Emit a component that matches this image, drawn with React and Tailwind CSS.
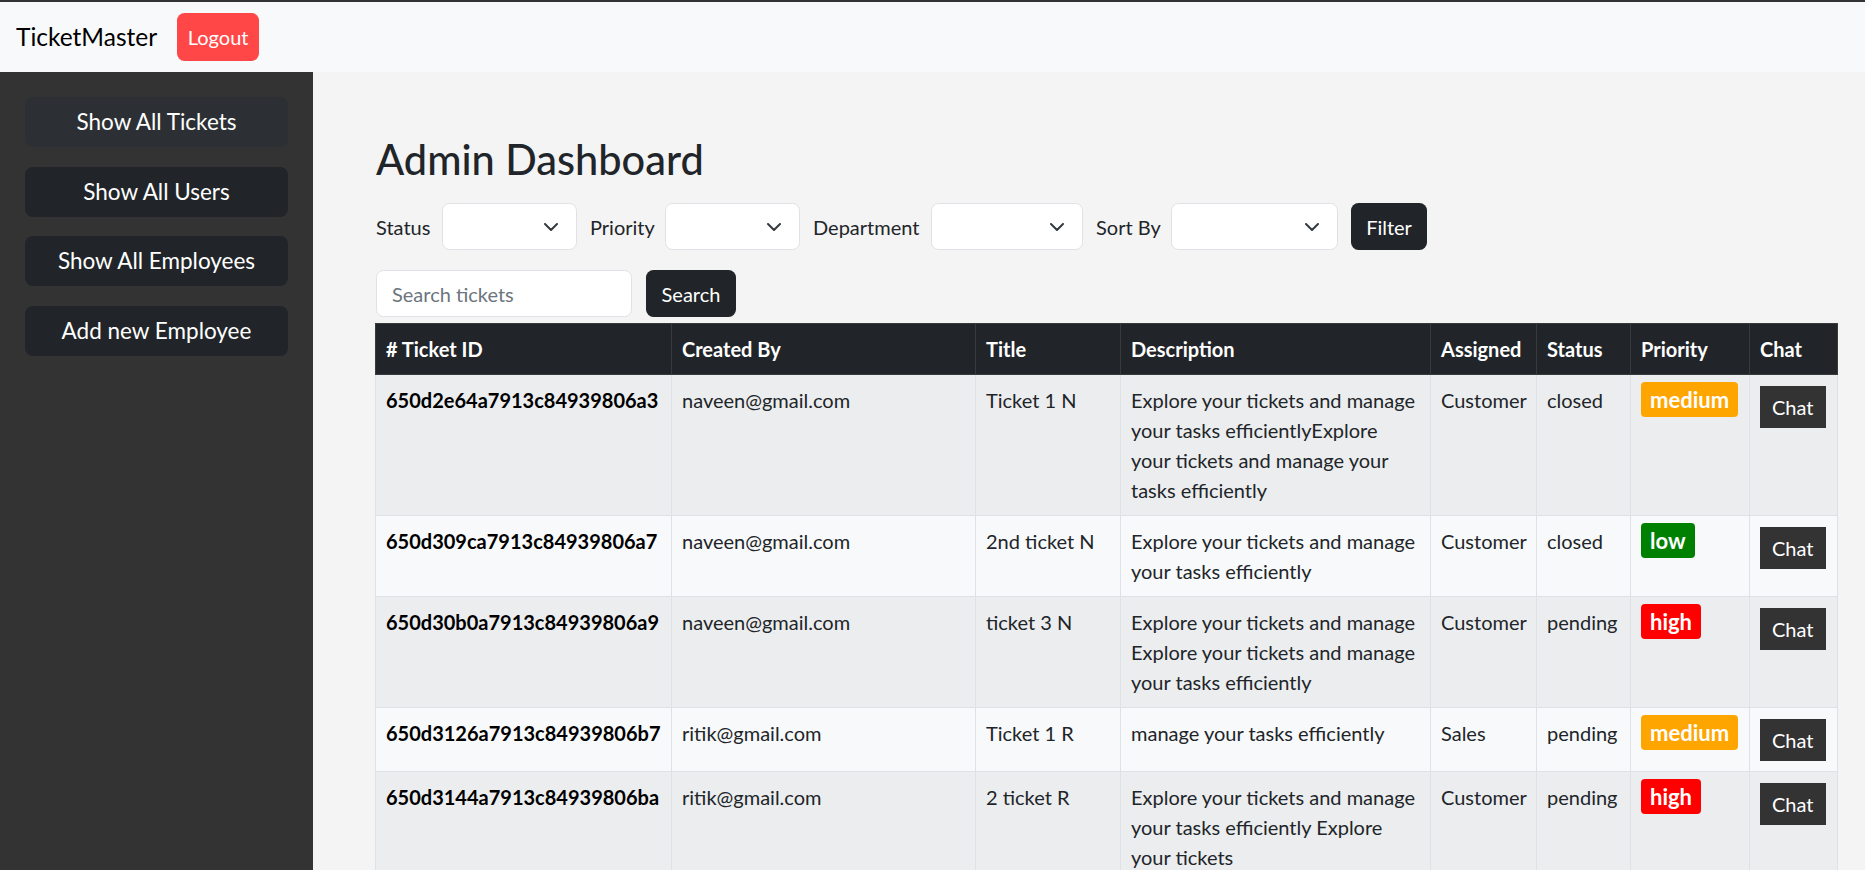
import { useState } from 'react'

const tickets = [
  {
    id: '650d2e64a7913c84939806a3',
    by: 'naveen@gmail.com',
    title: 'Ticket 1 N',
    desc: 'Explore your tickets and manage your tasks efficientlyExplore your tickets and manage your tasks efficiently',
    dept: 'Customer',
    status: 'closed',
    priority: 'medium',
  },
  {
    id: '650d309ca7913c84939806a7',
    by: 'naveen@gmail.com',
    title: '2nd ticket N',
    desc: 'Explore your tickets and manage your tasks efficiently',
    dept: 'Customer',
    status: 'closed',
    priority: 'low',
  },
  {
    id: '650d30b0a7913c84939806a9',
    by: 'naveen@gmail.com',
    title: 'ticket 3 N',
    desc: 'Explore your tickets and manage Explore your tickets and manage your tasks efficiently',
    dept: 'Customer',
    status: 'pending',
    priority: 'high',
  },
  {
    id: '650d3126a7913c84939806b7',
    by: 'ritik@gmail.com',
    title: 'Ticket 1 R',
    desc: 'manage your tasks efficiently',
    dept: 'Sales',
    status: 'pending',
    priority: 'medium',
  },
  {
    id: '650d3144a7913c84939806ba',
    by: 'ritik@gmail.com',
    title: '2 ticket R',
    desc: 'Explore your tickets and manage your tasks efficiently Explore your tickets',
    dept: 'Customer',
    status: 'pending',
    priority: 'high',
  },
]

const priorityColor = {
  low: 'bg-[#008000]',
  medium: 'bg-[#ffa500]',
  high: 'bg-[#ff0000]',
}

function Chevron() {
  return (
    <svg width="14" height="8" viewBox="0 0 14 8" fill="none">
      <path d="M1 1l6 6 6-6" stroke="#343a40" strokeWidth="2" strokeLinecap="round" strokeLinejoin="round" />
    </svg>
  )
}

// 下拉框（空值）
function FakeSelect({ width }) {
  return (
    <div className={`${width} h-[47px] bg-white border border-[#dee2e6] rounded-[7.5px] flex items-center justify-end pr-[18px]`}>
      <Chevron />
    </div>
  )
}

function Sidebar() {
  const items = ['Show All Tickets', 'Show All Users', 'Show All Employees', 'Add new Employee']
  return (
    <aside className="w-[313px] shrink-0 bg-[#333333] pt-[25px] px-[25px] flex flex-col gap-[19.5px]">
      {items.map((label, i) => (
        <button
          key={label}
          className={`h-[50px] w-full rounded-[8px] text-white text-[22.5px] ${i === 0 ? 'bg-[#2c3034]' : 'bg-[#212529]'}`}
        >
          {label}
        </button>
      ))}
    </aside>
  )
}

function TicketTable() {
  const th = 'px-[10px] py-[10px] leading-[30px] text-left font-bold text-white border border-[#373b3e]'
  const td = 'px-[10px] py-[10px] leading-[30px] align-top border border-[#dee2e6]'
  return (
    <table className="table-fixed border-collapse w-[1462px] text-[20px] text-[#212529]">
      <colgroup>
        <col className="w-[296px]" />
        <col className="w-[304px]" />
        <col className="w-[145px]" />
        <col className="w-[310px]" />
        <col className="w-[106px]" />
        <col className="w-[94px]" />
        <col className="w-[119px]" />
        <col className="w-[88px]" />
      </colgroup>
      <thead className="bg-[#212529]">
        <tr>
          <th className={th}># Ticket ID</th>
          <th className={th}>Created By</th>
          <th className={th}>Title</th>
          <th className={th}>Description</th>
          <th className={th}>Assigned</th>
          <th className={th}>Status</th>
          <th className={th}>Priority</th>
          <th className={th}>Chat</th>
        </tr>
      </thead>
      <tbody>
        {tickets.map((t, i) => (
          <tr key={t.id} className={i % 2 === 0 ? 'bg-[#ecedef]' : 'bg-[#f8f9fa]'}>
            <td className={`${td} font-bold text-black`}>{t.id}</td>
            <td className={td}>{t.by}</td>
            <td className={td}>{t.title}</td>
            <td className={td}>{t.desc}</td>
            <td className={td}>{t.dept}</td>
            <td className={td}>{t.status}</td>
            <td className={td}>
              <span className={`${priorityColor[t.priority]} text-white text-[22px] font-bold px-[9px] py-[4px] rounded-[4px]`}>
                {t.priority}
              </span>
            </td>
            <td className={td}>
              <button className="inline-block align-top bg-[#333333] text-white px-[12px] py-[6px] leading-[30px] mt-[1px]">
                Chat
              </button>
            </td>
          </tr>
        ))}
      </tbody>
    </table>
  )
}

export default function App() {
  const [query, setQuery] = useState('')

  return (
    <div className="h-screen overflow-hidden flex flex-col border-t-2 border-[#333333] font-['Lato','Segoe_UI',sans-serif]">
      <nav className="h-[70px] shrink-0 bg-[#f8f9fa] flex items-center pl-[16px]">
        <span className="text-[24.5px] text-black mr-[20px]">TicketMaster</span>
        <button className="h-[48px] w-[82px] rounded-[7.5px] bg-[#ff4747] text-white text-[20px]">Logout</button>
      </nav>

      <div className="flex flex-1">
        <Sidebar />

        <main className="flex-1 bg-[#f4f4f4] pl-[62px] pr-[28px] pt-[63px] text-[#212529]">
          <h1 className="text-[41.5px] leading-[48px] font-medium pl-[1px]">Admin Dashboard</h1>

          <div className="mt-[20px] flex items-center gap-[13px] text-[20px] pl-[1px] whitespace-nowrap">
            <span className="w-[53px]">Status</span>
            <FakeSelect width="w-[135px]" />
            <span className="w-[62px]">Priority</span>
            <FakeSelect width="w-[135px]" />
            <span className="w-[105px]">Department</span>
            <FakeSelect width="w-[152px]" />
            <span className="w-[62px]">Sort By</span>
            <FakeSelect width="w-[167px]" />
            <button className="h-[47px] w-[76px] rounded-[7.5px] bg-[#212529] text-white">Filter</button>
          </div>

          <div className="mt-[20px] flex items-center gap-[14px] text-[20px] pl-[1px]">
            <input
              value={query}
              onChange={(e) => setQuery(e.target.value)}
              placeholder="Search tickets"
              className="w-[256px] h-[47px] bg-white border border-[#dee2e6] rounded-[7.5px] px-[15px] placeholder:text-[#6c757d] outline-none"
            />
            <button className="h-[47px] w-[90px] rounded-[7.5px] bg-[#212529] text-white">Search</button>
          </div>

          <div className="mt-[6px]">
            <TicketTable />
          </div>
        </main>
      </div>
    </div>
  )
}
